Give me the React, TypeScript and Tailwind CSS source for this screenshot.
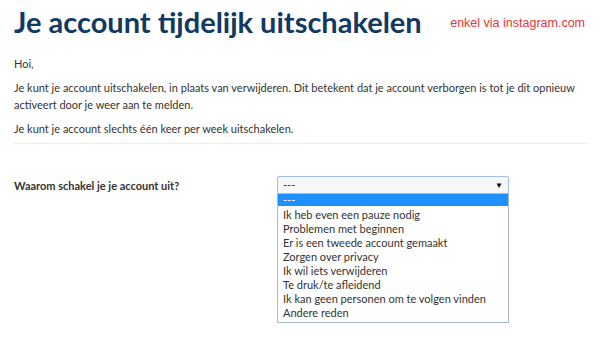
const options = [
  'Ik heb even een pauze nodig',
  'Problemen met beginnen',
  'Er is een tweede account gemaakt',
  'Zorgen over privacy',
  'Ik wil iets verwijderen',
  'Te druk/te afleidend',
  'Ik kan geen personen om te volgen vinden',
  'Andere reden',
];

const App = () => {
  return (
    <div className="h-[347px] w-[605px] overflow-hidden bg-white font-['Lato',sans-serif] text-[#333]">
      <header className="flex items-center whitespace-nowrap pl-[14px] pt-[4px]">
        <h1 className="text-[29px] font-bold leading-[36px] text-[#12395f]">Je account tijdelijk uitschakelen</h1>
        <span className="ml-auto mr-[20px] mt-[3px] font-['Liberation_Sans',sans-serif] text-[12.5px] text-[#e8333b]">
          enkel via instagram.com
        </span>
      </header>
      <section className="ml-[14px] mr-[16px] mt-[15px] border-b border-[#eeeeee] pb-[6px] text-[11px] leading-[17px]">
        <p>Hoi,</p>
        <p className="mt-[7px]">
          Je kunt je account uitschakelen, in plaats van verwijderen. Dit betekent dat je account verborgen is tot je dit opnieuw activeert door je weer aan te melden.
        </p>
        <p className="mt-[7px]">Je kunt je account slechts één keer per week uitschakelen.</p>
      </section>
      <div className="mt-[32px] flex pl-[14px]">
        <label className="w-[263px] pt-[2px] text-[11px] font-bold leading-[15px]">Waarom schakel je je account uit?</label>
        <div className="w-[232px]">
          <div className="flex h-[18px] items-center justify-between rounded-t-[2px] border border-[#9ebfe8] bg-[#f7f7f7] px-[5px] text-[11px]">
            <span>---</span>
            <span className="text-[8px] text-black">▼</span>
          </div>
          <ul className="border border-t-0 border-[#a7b7cf] bg-white pb-[2px] text-[11px] leading-[14px]">
            <li className="mb-[2px] h-[12px] bg-[#1e90ff] px-[5px] leading-[11px] text-white">---</li>
            {options.map((o) => (
              <li key={o} className="px-[5px]">
                {o}
              </li>
            ))}
          </ul>
        </div>
      </div>
    </div>
  );
};

export default App;
